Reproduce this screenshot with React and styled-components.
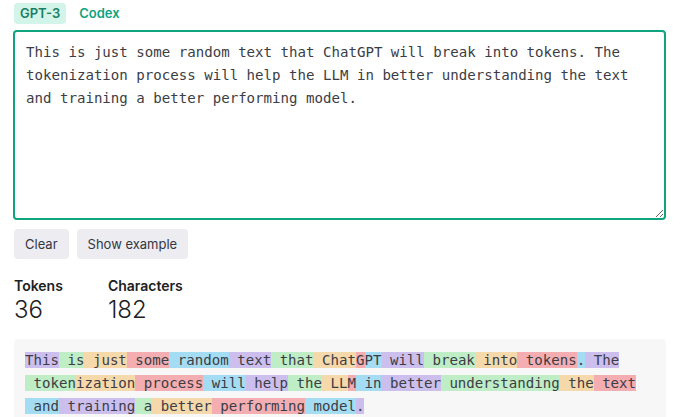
import React from "react";
import styled, { createGlobalStyle } from "styled-components";

const GlobalStyle = createGlobalStyle`
  body {
    margin: 0;
    background: #fff;
    font-family: Inter, "Noto Sans", sans-serif;
    color: #202123;
  }
`;

const TEXT =
  "This is just some random text that ChatGPT will break into tokens. The tokenization process will help the LLM in better understanding the text and training a better performing model.";

// token lines, as the tokenizer shows them
const LINES = [
  ["This", " is", " just", " some", " random", " text", " that", " Chat", "G", "PT", " will", " break", " into", " tokens", ".", " The"],
  [" token", "ization", " process", " will", " help", " the", " LL", "M", " in", " better", " understanding", " the", " text"],
  [" and", " training", " a", " better", " performing", " model", "."],
];

const COLORS = [
  "rgba(107, 64, 216, 0.3)",
  "rgba(104, 222, 122, 0.4)",
  "rgba(244, 172, 54, 0.4)",
  "rgba(239, 65, 70, 0.4)",
  "rgba(39, 181, 234, 0.4)",
];

export default function App() {
  let n = 0;
  return (
    <>
      <GlobalStyle />
      <Page>
        <Tabs>
          <Tab $active>GPT-3</Tab>
          <Tab>Codex</Tab>
        </Tabs>
        <Input defaultValue={TEXT} spellCheck={false} />
        <Buttons>
          <Button>Clear</Button>
          <Button>Show example</Button>
        </Buttons>
        <Stats>
          <Stat>
            <Label>Tokens</Label>
            <Value>36</Value>
          </Stat>
          <Stat>
            <Label>Characters</Label>
            <Value>182</Value>
          </Stat>
        </Stats>
        <TokenBox>
          {LINES.map((line, i) => (
            <Line key={i}>
              {line.map((tok, j) => {
                const c = COLORS[n++ % COLORS.length];
                return (
                  <Token key={j} $color={c}>
                    {tok}
                  </Token>
                );
              })}
            </Line>
          ))}
        </TokenBox>
      </Page>
    </>
  );
}

const Page = styled.div`
  display: flex;
  flex-direction: column;
  width: 653px;
  padding: 3px 0 0 13px;
`;

const Tabs = styled.div`
  display: flex;
  gap: 7px;
  margin-left: 1px;
`;

const Tab = styled.div`
  height: 21px;
  line-height: 21px;
  padding: 0 6px;
  border-radius: 4px;
  font-size: 13px;
  font-weight: 600;
  color: ${(p) => (p.$active ? "#1a7f64" : "#10a37f")};
  background: ${(p) => (p.$active ? "#d2f4e9" : "transparent")};
`;

const Input = styled.textarea`
  box-sizing: border-box;
  margin-top: 6px;
  width: 653px;
  height: 190px;
  padding: 9px 11px;
  border: 2px solid #10a37f;
  border-radius: 4px;
  outline: none;
  font-family: "DejaVu Sans Mono", "Liberation Mono", monospace;
  font-size: 14.1px;
  line-height: 23px;
  color: #3c3d45;
  background: #fff;
`;

const Buttons = styled.div`
  display: flex;
  gap: 8px;
  margin: 9px 0 0 1px;
`;

const Button = styled.button`
  height: 30px;
  padding: 0 11px;
  border: none;
  border-radius: 4px;
  background: #ececf1;
  color: #353740;
  font-family: Inter, sans-serif;
  font-size: 13px;
`;

const Stats = styled.div`
  display: flex;
  gap: 45px;
  margin: 17px 0 0 1px;
`;

const Stat = styled.div`
  display: flex;
  flex-direction: column;
`;

const Label = styled.div`
  font-size: 14px;
  line-height: 20px;
  font-weight: 600;
  color: #202123;
`;

const Value = styled.div`
  font-size: 24px;
  line-height: 28px;
  font-weight: 300;
  color: #202123;
`;

const TokenBox = styled.div`
  margin: 15px 0 0 1px;
  padding: 10px 11px 12px;
  background: #f7f7f8;
  border-radius: 4px;
  font-family: "DejaVu Sans Mono", "Liberation Mono", monospace;
  font-size: 14.1px;
  line-height: 23px;
  color: #3c3d45;
`;

const Line = styled.div`
  white-space: pre;
`;

const Token = styled.span`
  background: ${(p) => p.$color};
`;
